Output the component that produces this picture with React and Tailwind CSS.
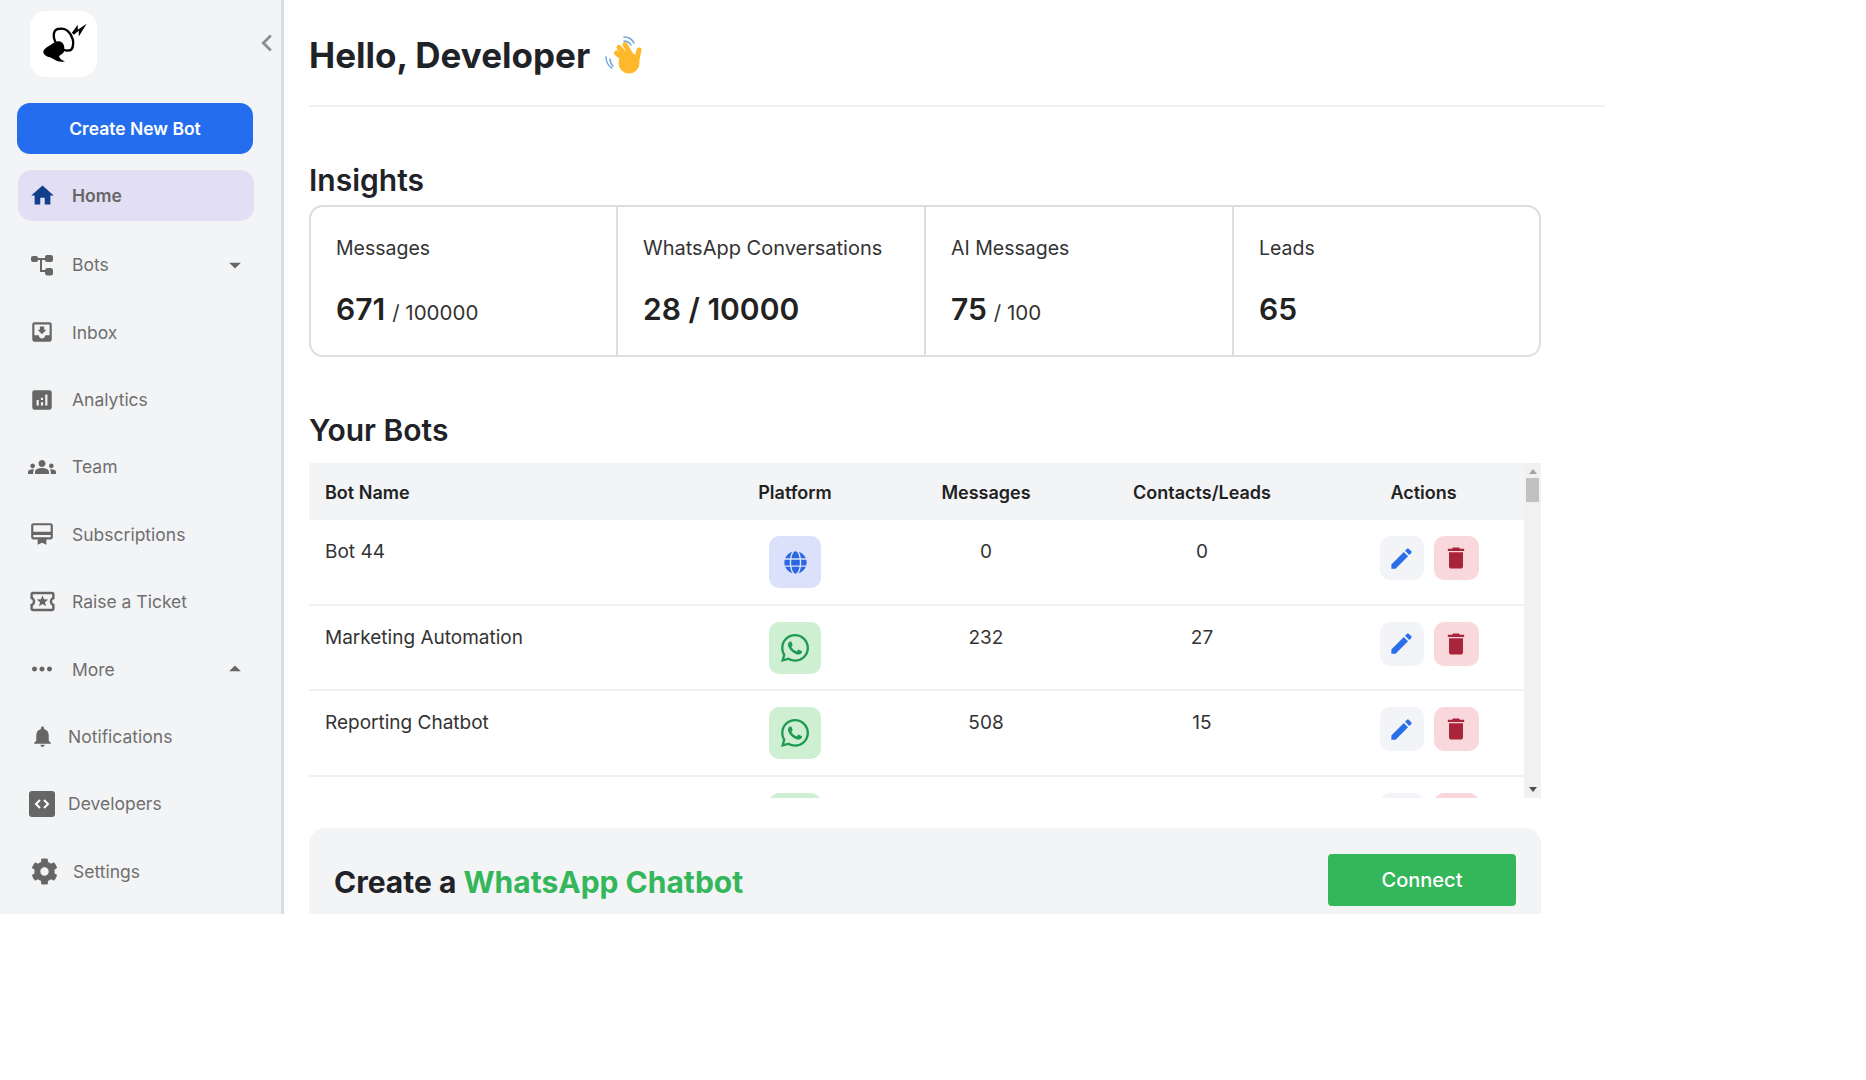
import React from "react";
import { MdHome, MdMoveToInbox, MdAnalytics, MdGroups, MdCardMembership, MdOutlineLocalActivity, MdMoreHoriz, MdNotifications, MdEdit, MdDelete, MdArrowDropDown, MdArrowDropUp, MdChevronLeft } from "react-icons/md";
import { FaCog, FaGlobe, FaWhatsapp } from "react-icons/fa";

const font = { fontFamily: "Inter, 'Noto Sans', sans-serif" };

function Logo() {
  return (
    <svg viewBox="0 0 67 67" className="h-full w-full">
      <path d="M13 41c1-3 5-5 8-7 3-2 6-4 9-3 4 1 5 6 4 10-1 3-4 3-5 5 1 3 3 4 6 5-7 2-11-2-15-4-3-1-7-2-7-6z" fill="#000" />
      <path d="M30 18c6-1 11 4 13 11 1 5 0 11-4 11-6 1-11-3-14-9-2-4-2-10 1-12 1-1 2-1 4-1z" fill="none" stroke="#000" strokeWidth="2.4" />
      <path d="M42 22l6-8 0 5 9-6-8 13 0-6-5 4z" fill="#000" />
    </svg>
  );
}

function Wave() {
  return (
    <svg viewBox="0 0 55 50" className="h-[50px] w-[55px]">
      <circle cx="33" cy="33" r="10.5" fill="#FDB92B" />
      <path d="M30 31L20.5 23M32 28L23 17.5M36 27L29 14.5M41 30L43 20" stroke="#FDB92B" strokeWidth="5" strokeLinecap="round" fill="none" />
      <path d="M28 7c4 0 8 2 10 6M28 11c3 0 5 1 7 4" stroke="#6FA8DC" strokeWidth="1.5" fill="none" strokeLinecap="round" />
      <path d="M10 27c0 4 2 9 6 11M14 29c0 3 1 5 3 7" stroke="#6FA8DC" strokeWidth="1.5" fill="none" strokeLinecap="round" />
    </svg>
  );
}

function DevIcon() {
  return (
    <svg viewBox="0 0 26 26" className="h-[26px] w-[26px]">
      <rect width="26" height="26" rx="3" fill="#666" />
      <path d="M11 9l-4 4 4 4M15 9l4 4-4 4" fill="none" stroke="#fff" strokeWidth="2" />
    </svg>
  );
}

function BotsIcon() {
  return (
    <svg viewBox="0 0 24 24" className="h-[24px] w-[24px]">
      <path d="M7 6h8M11 6v12h5" fill="none" stroke="#666" strokeWidth="2" />
      <rect x="1" y="3" width="7" height="6" rx="2" fill="#666" />
      <rect x="15" y="2" width="8" height="7" rx="2" fill="#666" />
      <rect x="15" y="15" width="8" height="7.5" rx="2.5" fill="#666" />
    </svg>
  );
}

function NavRow({ icon, label, caret, boxClass = "w-[48px] mr-[6px]", active }) {
  return (
    <div className={`flex h-[51px] items-center rounded-[14px] ${active ? "bg-[#E2DEF3]" : ""}`}>
      <div className={`flex h-full shrink-0 items-center justify-center ${boxClass}`}>{icon}</div>
      <span className={`flex-1 pt-[1px] text-[17.5px] ${active ? "font-semibold text-[#666]" : "text-[#6f6f6f]"}`}>{label}</span>
      {caret && <span className="pr-[5px] text-[#666]">{caret}</span>}
    </div>
  );
}

function Stat({ label, value, suffix, last, labelClass = "text-[19.5px]" }) {
  return (
    <div className={`pl-[25px] pt-[28px] ${last ? "" : "border-r-2 border-[#dedede]"}`}>
      <p className={`leading-[26px] text-[#333] ${labelClass}`}>{label}</p>
      <p className="mt-[28px] leading-[40px] text-[#222]">
        <span className="text-[30px] font-semibold">{value}</span>
        {suffix && <span className="ml-[7px] text-[20.5px] text-[#333]">{suffix}</span>}
      </p>
    </div>
  );
}

const rows = [
  { name: "Bot 44", web: true, msg: "0", leads: "0" },
  { name: "Marketing Automation", msg: "232", leads: "27" },
  { name: "Reporting Chatbot", msg: "508", leads: "15" },
  { name: "", msg: "", leads: "" },
];

function BotRow({ r }) {
  return (
    <div className="grid h-[85.5px] shrink-0 grid-cols-[390px_192px_190px_242px_201px] border-b-2 border-[#f1f1f1] pt-[16px] text-[19px] leading-[32px] text-[#333]">
      <div className="pl-[16px]">{r.name}</div>
      <div className="flex justify-center">
        <div className={`flex h-[52px] w-[52px] items-center justify-center rounded-[10px] ${r.web ? "bg-[#DCE1FB]" : "bg-[#CFEFD2]"}`}>
          {r.web ? <FaGlobe className="text-[23px] text-[#2B67E0]" /> : <FaWhatsapp className="text-[32px] text-[#1F9A52]" />}
        </div>
      </div>
      <div className="text-center">{r.msg}</div>
      <div className="text-center">{r.leads}</div>
      <div className="flex items-start justify-center gap-[10px] pl-[11px]">
        <div className="flex h-[44px] w-[44px] items-center justify-center rounded-[10px] bg-[#F2F4F7]">
          <MdEdit className="text-[27px] text-[#2B6FE8]" />
        </div>
        <div className="flex h-[44px] w-[45px] items-center justify-center rounded-[10px] bg-[#F9D8DC]">
          <MdDelete className="text-[28px] text-[#A8243B]" />
        </div>
      </div>
    </div>
  );
}

export default function App() {
  return (
    <div style={font} className="flex h-[914px] w-[1866px] overflow-hidden bg-white">
      <aside className="flex w-[284px] shrink-0 flex-col border-r-[3px] border-[#D9DCE6] bg-[#F3F4F6]">
        <div className="relative h-[103px] shrink-0 pt-[11px]">
          <div className="ml-[30px] h-[66px] w-[67px] rounded-[16px] bg-white"><Logo /></div>
          <MdChevronLeft className="absolute left-[250px] top-[26px] text-[34px] text-[#8a8f98]" />
        </div>
        <button className="ml-[17px] h-[51px] w-[236px] shrink-0 rounded-[13px] bg-[#256DEF] pt-[1px] text-[17.5px] font-semibold text-white">Create New Bot</button>
        <div className="ml-[18px] mt-[16px] flex w-[236px] flex-col gap-[16.4px]">
          <NavRow active label="Home" icon={<MdHome className="text-[27px] text-[#123F8C]" />} />
          <div className="mt-[2px] flex flex-col gap-[16.4px]">
            <NavRow label="Bots" caret={<MdArrowDropDown className="text-[28px]" />} icon={<BotsIcon />} />
            <NavRow label="Inbox" icon={<MdMoveToInbox className="text-[26px] text-[#666]" />} />
            <NavRow label="Analytics" icon={<MdAnalytics className="text-[26px] text-[#666]" />} />
            <NavRow label="Team" icon={<MdGroups className="text-[28px] text-[#666]" />} />
            <NavRow label="Subscriptions" icon={<MdCardMembership className="text-[26px] text-[#666]" />} />
            <NavRow label="Raise a Ticket" icon={<MdOutlineLocalActivity className="text-[29px] text-[#666]" />} />
            <NavRow label="More" caret={<MdArrowDropUp className="text-[28px]" />} icon={<MdMoreHoriz className="text-[30px] text-[#666]" />} />
            <NavRow label="Notifications" boxClass="w-[48px] mr-[2px]" icon={<MdNotifications className="text-[25px] text-[#666]" />} />
            <NavRow label="Developers" boxClass="w-[48px] mr-[2px]" icon={<DevIcon />} />
            <NavRow label="Settings" boxClass="w-[52px] mr-[3px]" icon={<FaCog className="text-[27px] text-[#666]" />} />
          </div>
        </div>
      </aside>

      <main className="flex min-w-0 flex-1 flex-col pl-[25px]">
        <div className="flex h-[107px] w-[1296px] shrink-0 items-start border-b-2 border-[#f2f2f2] pt-[33px]">
          <h1 className="text-[35px] font-bold leading-[44px] text-[#1f2328]">Hello, Developer</h1>
          <div className="ml-[6px] -mt-[3px]"><Wave /></div>
        </div>
        <h2 className="mt-[54px] text-[30px] font-semibold leading-[38px] text-[#1f2328]">Insights</h2>
        <div className="mt-[6px] grid h-[152px] w-[1232px] shrink-0 grid-cols-[307px_308px_308px_1fr] rounded-[14px] border-2 border-[#dedede]">
          <Stat label="Messages" value="671" suffix="/ 100000" />
          <Stat label="WhatsApp Conversations" value="28 / 10000" labelClass="text-[20px]" />
          <Stat label="AI Messages" value="75" suffix="/ 100" />
          <Stat label="Leads" value="65" last />
        </div>
        <h2 className="mt-[54px] text-[30px] font-semibold leading-[38px] text-[#1f2328]">Your Bots</h2>
        <div className="mt-[14px] flex h-[335px] w-[1232px] shrink-0 overflow-hidden">
          <div className="flex w-[1215px] flex-col overflow-hidden">
            <div className="grid h-[57px] shrink-0 grid-cols-[390px_192px_190px_242px_201px] items-center bg-[#F3F4F6] pt-[1px] text-[18px] font-semibold text-[#222]">
              <div className="pl-[16px]">Bot Name</div>
              <div className="text-center">Platform</div>
              <div className="text-center">Messages</div>
              <div className="text-center">Contacts/Leads</div>
              <div className="text-center">Actions</div>
            </div>
            {rows.map((r, i) => <BotRow key={i} r={r} />)}
          </div>
          <div className="relative w-[17px] shrink-0 bg-[#f1f1f1]">
            <div className="absolute left-[5px] top-[6px] h-0 w-0 border-x-[4px] border-b-[5px] border-x-transparent border-b-[#a3a3a3]" />
            <div className="absolute left-[2px] top-[15px] h-[24px] w-[13px] bg-[#c1c1c1]" />
            <div className="absolute bottom-[6px] left-[5px] h-0 w-0 border-x-[4px] border-t-[5px] border-x-transparent border-t-[#505050]" />
          </div>
        </div>
        <div className="mt-[30px] flex h-[110px] w-[1232px] shrink-0 items-start justify-between rounded-[16px] bg-[#F3F4F6] pl-[25px] pr-[25px] pt-[26px]">
          <h3 className="mt-[9px] text-[30px] font-bold leading-[38px] text-[#1f2328]">
            Create a <span className="text-[#34B65A]">WhatsApp Chatbot</span>
          </h3>
          <button className="h-[52px] w-[188px] rounded-[4px] bg-[#34B65A] text-[20px] font-medium text-white">Connect</button>
        </div>
      </main>
    </div>
  );
}
